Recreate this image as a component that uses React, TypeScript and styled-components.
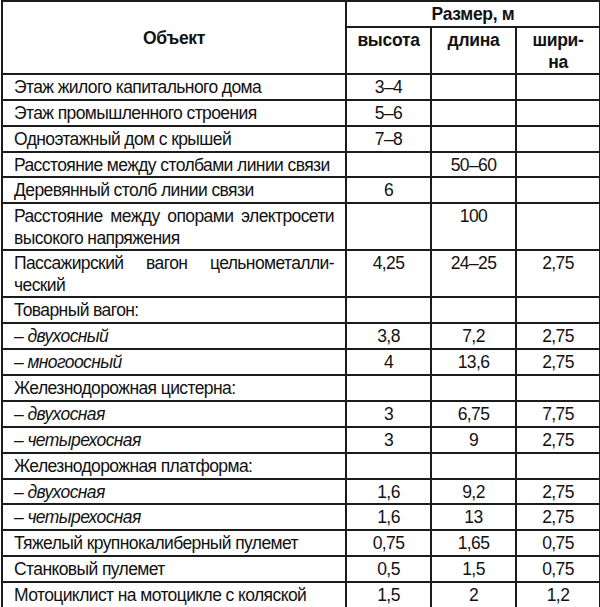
import React from "react";
import styled, { createGlobalStyle } from "styled-components";

const GlobalStyle = createGlobalStyle`
  html, body {
    margin: 0;
    padding: 0;
    background: #fff;
  }
`;

const Table = styled.table`
  border-collapse: collapse;
  width: 598px;
  margin: 0 0 0 1px;
  font-family: "Liberation Sans", Arial, sans-serif;
  font-size: 17.5px;
  letter-spacing: -0.6px;
  line-height: 22px;
  color: #111;
  table-layout: fixed;
`;

const Tr = styled.tr<{ $double?: boolean }>`
  height: ${(p) => (p.$double ? "47px" : "25.9px")};
`;

const Th = styled.th<{ $valign?: string }>`
  border: 2px solid #1c1c1c;
  font-weight: bold;
  letter-spacing: -0.3px;
  text-align: center;
  vertical-align: ${(p) => p.$valign || "middle"};
  padding: 1px 4px 0;
`;

const Td = styled.td<{ $num?: boolean; $italic?: boolean }>`
  border: 2px solid #1c1c1c;
  vertical-align: top;
  padding: 1px ${(p) => (p.$num ? "4px" : "11px")} 0;
  text-align: ${(p) => (p.$num ? "center" : "left")};
  font-style: ${(p) => (p.$italic ? "italic" : "normal")};
  white-space: nowrap;
`;

const JustLine = styled.span`
  display: block;
  text-align: justify;
  text-align-last: justify;
`;

type Row = {
  name: React.ReactNode;
  italic?: boolean;
  double?: boolean;
  h?: string;
  l?: string;
  w?: string;
};

const rows: Row[] = [
  { name: "Этаж жилого капитального дома", h: "3–4" },
  { name: "Этаж промышленного строения", h: "5–6" },
  { name: "Одноэтажный дом с крышей", h: "7–8" },
  { name: "Расстояние между столбами линии связи", l: "50–60" },
  { name: "Деревянный столб линии связи", h: "6" },
  {
    name: (
      <>
        <JustLine>Расстояние между опорами электросети</JustLine>
        высокого напряжения
      </>
    ),
    double: true,
    l: "100",
  },
  {
    name: (
      <>
        <JustLine>Пассажирский вагон цельнометалли-</JustLine>
        ческий
      </>
    ),
    double: true,
    h: "4,25",
    l: "24–25",
    w: "2,75",
  },
  { name: "Товарный вагон:" },
  { name: "– двухосный", italic: true, h: "3,8", l: "7,2", w: "2,75" },
  { name: "– многоосный", italic: true, h: "4", l: "13,6", w: "2,75" },
  { name: "Железнодорожная цистерна:" },
  { name: "– двухосная", italic: true, h: "3", l: "6,75", w: "7,75" },
  { name: "– четырехосная", italic: true, h: "3", l: "9", w: "2,75" },
  { name: "Железнодорожная платформа:" },
  { name: "– двухосная", italic: true, h: "1,6", l: "9,2", w: "2,75" },
  { name: "– четырехосная", italic: true, h: "1,6", l: "13", w: "2,75" },
  { name: "Тяжелый крупнокалиберный пулемет", h: "0,75", l: "1,65", w: "0,75" },
  { name: "Станковый пулемет", h: "0,5", l: "1,5", w: "0,75" },
  { name: "Мотоциклист на мотоцикле с коляской", h: "1,5", l: "2", w: "1,2" },
];

export default function App() {
  return (
    <>
      <GlobalStyle />
      <Table>
        <colgroup>
          <col style={{ width: 344 }} />
          <col style={{ width: 85 }} />
          <col style={{ width: 85 }} />
          <col style={{ width: 84 }} />
        </colgroup>
        <thead>
          <Tr>
            <Th rowSpan={2}>Объект</Th>
            <Th colSpan={3}>Размер, м</Th>
          </Tr>
          <Tr $double>
            <Th $valign="top">высота</Th>
            <Th $valign="top">длина</Th>
            <Th $valign="top">
              шири-
              <br />
              на
            </Th>
          </Tr>
        </thead>
        <tbody>
          {rows.map((r, i) => (
            <Tr key={i} $double={r.double}>
              <Td $italic={r.italic}>{r.name}</Td>
              <Td $num>{r.h}</Td>
              <Td $num>{r.l}</Td>
              <Td $num>{r.w}</Td>
            </Tr>
          ))}
        </tbody>
      </Table>
    </>
  );
}
